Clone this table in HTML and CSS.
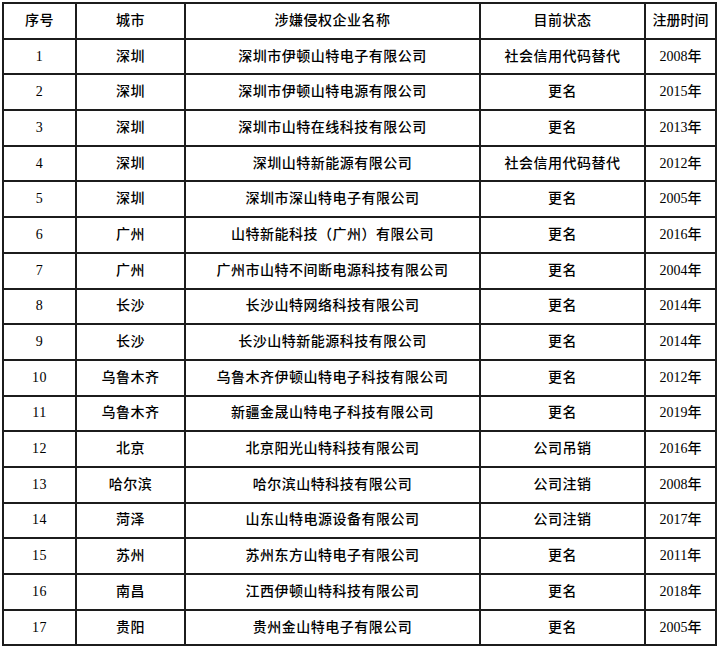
FILE: index.html
```html
<!DOCTYPE html>
<html lang="zh-CN">
<head>
<meta charset="utf-8">
<title>涉嫌侵权企业</title>
<link rel="stylesheet" href="styles.css">
</head>
<body>
<table class="grid">
  <colgroup>
    <col class="c-no"><col class="c-city"><col class="c-name"><col class="c-status"><col class="c-year">
  </colgroup>
  <thead>
    <tr><th>序号</th><th>城市</th><th>涉嫌侵权企业名称</th><th>目前状态</th><th>注册时间</th></tr>
  </thead>
  <tbody>
    <tr><td>1</td><td>深圳</td><td>深圳市伊顿山特电子有限公司</td><td>社会信用代码替代</td><td>2008年</td></tr>
    <tr><td>2</td><td>深圳</td><td>深圳市伊顿山特电源有限公司</td><td>更名</td><td>2015年</td></tr>
    <tr><td>3</td><td>深圳</td><td>深圳市山特在线科技有限公司</td><td>更名</td><td>2013年</td></tr>
    <tr><td>4</td><td>深圳</td><td>深圳山特新能源有限公司</td><td>社会信用代码替代</td><td>2012年</td></tr>
    <tr><td>5</td><td>深圳</td><td>深圳市深山特电子有限公司</td><td>更名</td><td>2005年</td></tr>
    <tr><td>6</td><td>广州</td><td>山特新能科技（广州）有限公司</td><td>更名</td><td>2016年</td></tr>
    <tr><td>7</td><td>广州</td><td>广州市山特不间断电源科技有限公司</td><td>更名</td><td>2004年</td></tr>
    <tr><td>8</td><td>长沙</td><td>长沙山特网络科技有限公司</td><td>更名</td><td>2014年</td></tr>
    <tr><td>9</td><td>长沙</td><td>长沙山特新能源科技有限公司</td><td>更名</td><td>2014年</td></tr>
    <tr><td>10</td><td>乌鲁木齐</td><td>乌鲁木齐伊顿山特电子科技有限公司</td><td>更名</td><td>2012年</td></tr>
    <tr><td>11</td><td>乌鲁木齐</td><td>新疆金晟山特电子科技有限公司</td><td>更名</td><td>2019年</td></tr>
    <tr><td>12</td><td>北京</td><td>北京阳光山特科技有限公司</td><td>公司吊销</td><td>2016年</td></tr>
    <tr><td>13</td><td>哈尔滨</td><td>哈尔滨山特科技有限公司</td><td>公司注销</td><td>2008年</td></tr>
    <tr><td>14</td><td>菏泽</td><td>山东山特电源设备有限公司</td><td>公司注销</td><td>2017年</td></tr>
    <tr><td>15</td><td>苏州</td><td>苏州东方山特电子有限公司</td><td>更名</td><td>2011年</td></tr>
    <tr><td>16</td><td>南昌</td><td>江西伊顿山特科技有限公司</td><td>更名</td><td>2018年</td></tr>
    <tr><td>17</td><td>贵阳</td><td>贵州金山特电子有限公司</td><td>更名</td><td>2005年</td></tr>
  </tbody>
</table>
</body>
</html>
```
FILE: styles.css
```css
html, body {
  margin: 0;
  padding: 0;
  background: #ffffff;
}
body {
  padding: 2px 0 0 2px;
}
.grid {
  border-collapse: collapse;
  table-layout: fixed;
  width: 714px;
  font-family: "Liberation Serif", "Noto Sans CJK SC", serif;
  font-size: 14px;
  color: #000;
  letter-spacing: 0.5px;
}
.c-no { width: 73px; }
.c-city { width: 109px; }
.c-name { width: 295px; }
.c-status { width: 165px; }
.c-year { width: 71px; }
.grid tr {
  height: 35.7px;
}
.grid th,
.grid td {
  border: 2px solid #1c1c1c;
  text-align: center;
  vertical-align: middle;
  padding: 0;
  font-weight: 500;
  line-height: 1;
  white-space: nowrap;
}
.grid td:last-child,
.grid th:last-child {
  letter-spacing: 0;
}
```
